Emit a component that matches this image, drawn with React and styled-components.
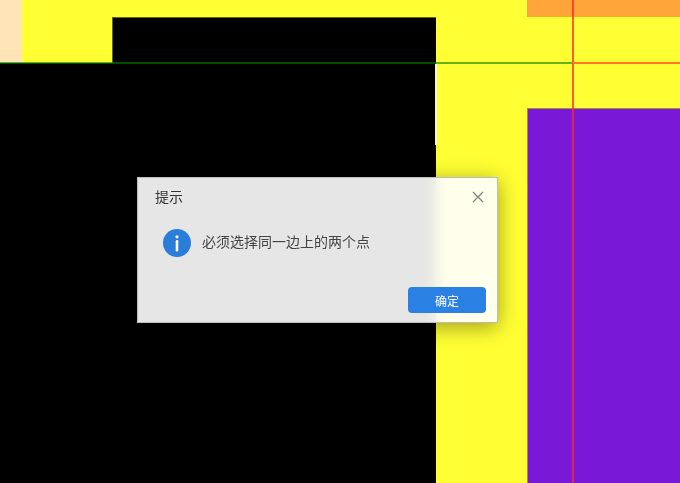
import React from "react";
import styled, { createGlobalStyle } from "styled-components";

const GlobalStyle = createGlobalStyle`
  html, body {
    margin: 0;
    padding: 0;
    width: 680px;
    height: 483px;
    overflow: hidden;
    background: #ffff33;
  }
`;

const Canvas = styled.div`
  position: relative;
  width: 680px;
  height: 483px;
  overflow: hidden;
  display: grid;
  grid-template-columns: 22px 90px 324px 91px 153px;
  grid-template-rows: 17px 46px 45px 375px;
  background: #ffff33;
  font-family: "Liberation Sans", "Noto Sans CJK SC", sans-serif;
`;

const Block = styled.div`
  grid-column: ${(p) => p.$col};
  grid-row: ${(p) => p.$row};
  background: ${(p) => p.$color};
  ${(p) => p.$edge && `box-shadow: inset 1px 1px 0 ${p.$edge};`}
`;

// guide lines drawn over the shapes
const HLine = styled.div`
  position: absolute;
  top: 62px;
  left: ${(p) => p.$x}px;
  width: ${(p) => p.$w}px;
  height: 2px;
  background: ${(p) => p.$color};
`;

const VLine = styled.div`
  position: absolute;
  top: 0;
  left: 572px;
  width: 2px;
  height: 483px;
  background: rgba(255, 40, 40, 0.75);
`;

const Highlight = styled.div`
  position: absolute;
  top: 64px;
  left: 435px;
  width: 2px;
  height: 81px;
  background: #f4f4e6;
`;

const Dialog = styled.div`
  position: absolute;
  left: 137px;
  top: 177px;
  width: 361px;
  height: 146px;
  box-sizing: border-box;
  display: flex;
  flex-direction: column;
  background: rgba(255, 255, 255, 0.9);
  backdrop-filter: blur(7px);
  border: 1px solid #bcbcbc;
  box-shadow: 0 4px 20px rgba(0, 0, 0, 0.38);
`;

const Header = styled.div`
  display: flex;
  align-items: center;
  justify-content: space-between;
  height: 36px;
  padding: 0 13px 0 17px;
`;

const Title = styled.span`
  font-size: 14px;
  color: #333;
`;

const CloseButton = styled.button`
  display: flex;
  padding: 2px 0 0;
  border: none;
  background: none;
`;

const Body = styled.div`
  flex: 1;
  display: flex;
  align-items: flex-start;
  gap: 11px;
  padding: 15px 25px 0;
`;

const Message = styled.span`
  font-size: 14px;
  line-height: 26px;
  color: #444;
`;

const Footer = styled.div`
  display: flex;
  justify-content: flex-end;
  padding: 0 11px 9px;
`;

const OkButton = styled.button`
  width: 78px;
  height: 26px;
  padding: 0;
  border: none;
  border-radius: 4px;
  background: #2b80e4;
  color: #fff;
  font-family: inherit;
  font-size: 12px;
`;

function InfoIcon() {
  return (
    <svg width="28" height="28" viewBox="0 0 28 28">
      <circle cx="14" cy="14" r="14" fill="#2a7dd9" />
      <circle cx="14" cy="7.8" r="1.6" fill="#fff" />
      <rect x="12.7" y="11" width="2.6" height="11.5" rx="1.2" fill="#fff" />
    </svg>
  );
}

function CloseIcon() {
  return (
    <svg width="12" height="12" viewBox="0 0 12 12">
      <path d="M1 1 L11 11 M11 1 L1 11" stroke="#808080" strokeWidth="1.2" fill="none" />
    </svg>
  );
}

export default function App() {
  return (
    <Canvas>
      <GlobalStyle />
      <Block $col="1" $row="1 / 3" $color="#ffe4b5" />
      <Block $col="5" $row="1" $color="#ffa53a" />
      <Block $col="3" $row="2" $color="#000" $edge="#66661a" />
      <Block $col="1 / 4" $row="3 / 5" $color="#000" />
      <Block $col="5" $row="4" $color="#7a18d8" $edge="#a8902c" />
      <Highlight />
      <HLine $x={0} $w={572} $color="rgba(0, 128, 0, 0.6)" />
      <HLine $x={574} $w={106} $color="rgba(255, 60, 40, 0.7)" />
      <VLine />
      <Dialog>
        <Header>
          <Title>提示</Title>
          <CloseButton>
            <CloseIcon />
          </CloseButton>
        </Header>
        <Body>
          <InfoIcon />
          <Message>必须选择同一边上的两个点</Message>
        </Body>
        <Footer>
          <OkButton>确定</OkButton>
        </Footer>
      </Dialog>
    </Canvas>
  );
}
